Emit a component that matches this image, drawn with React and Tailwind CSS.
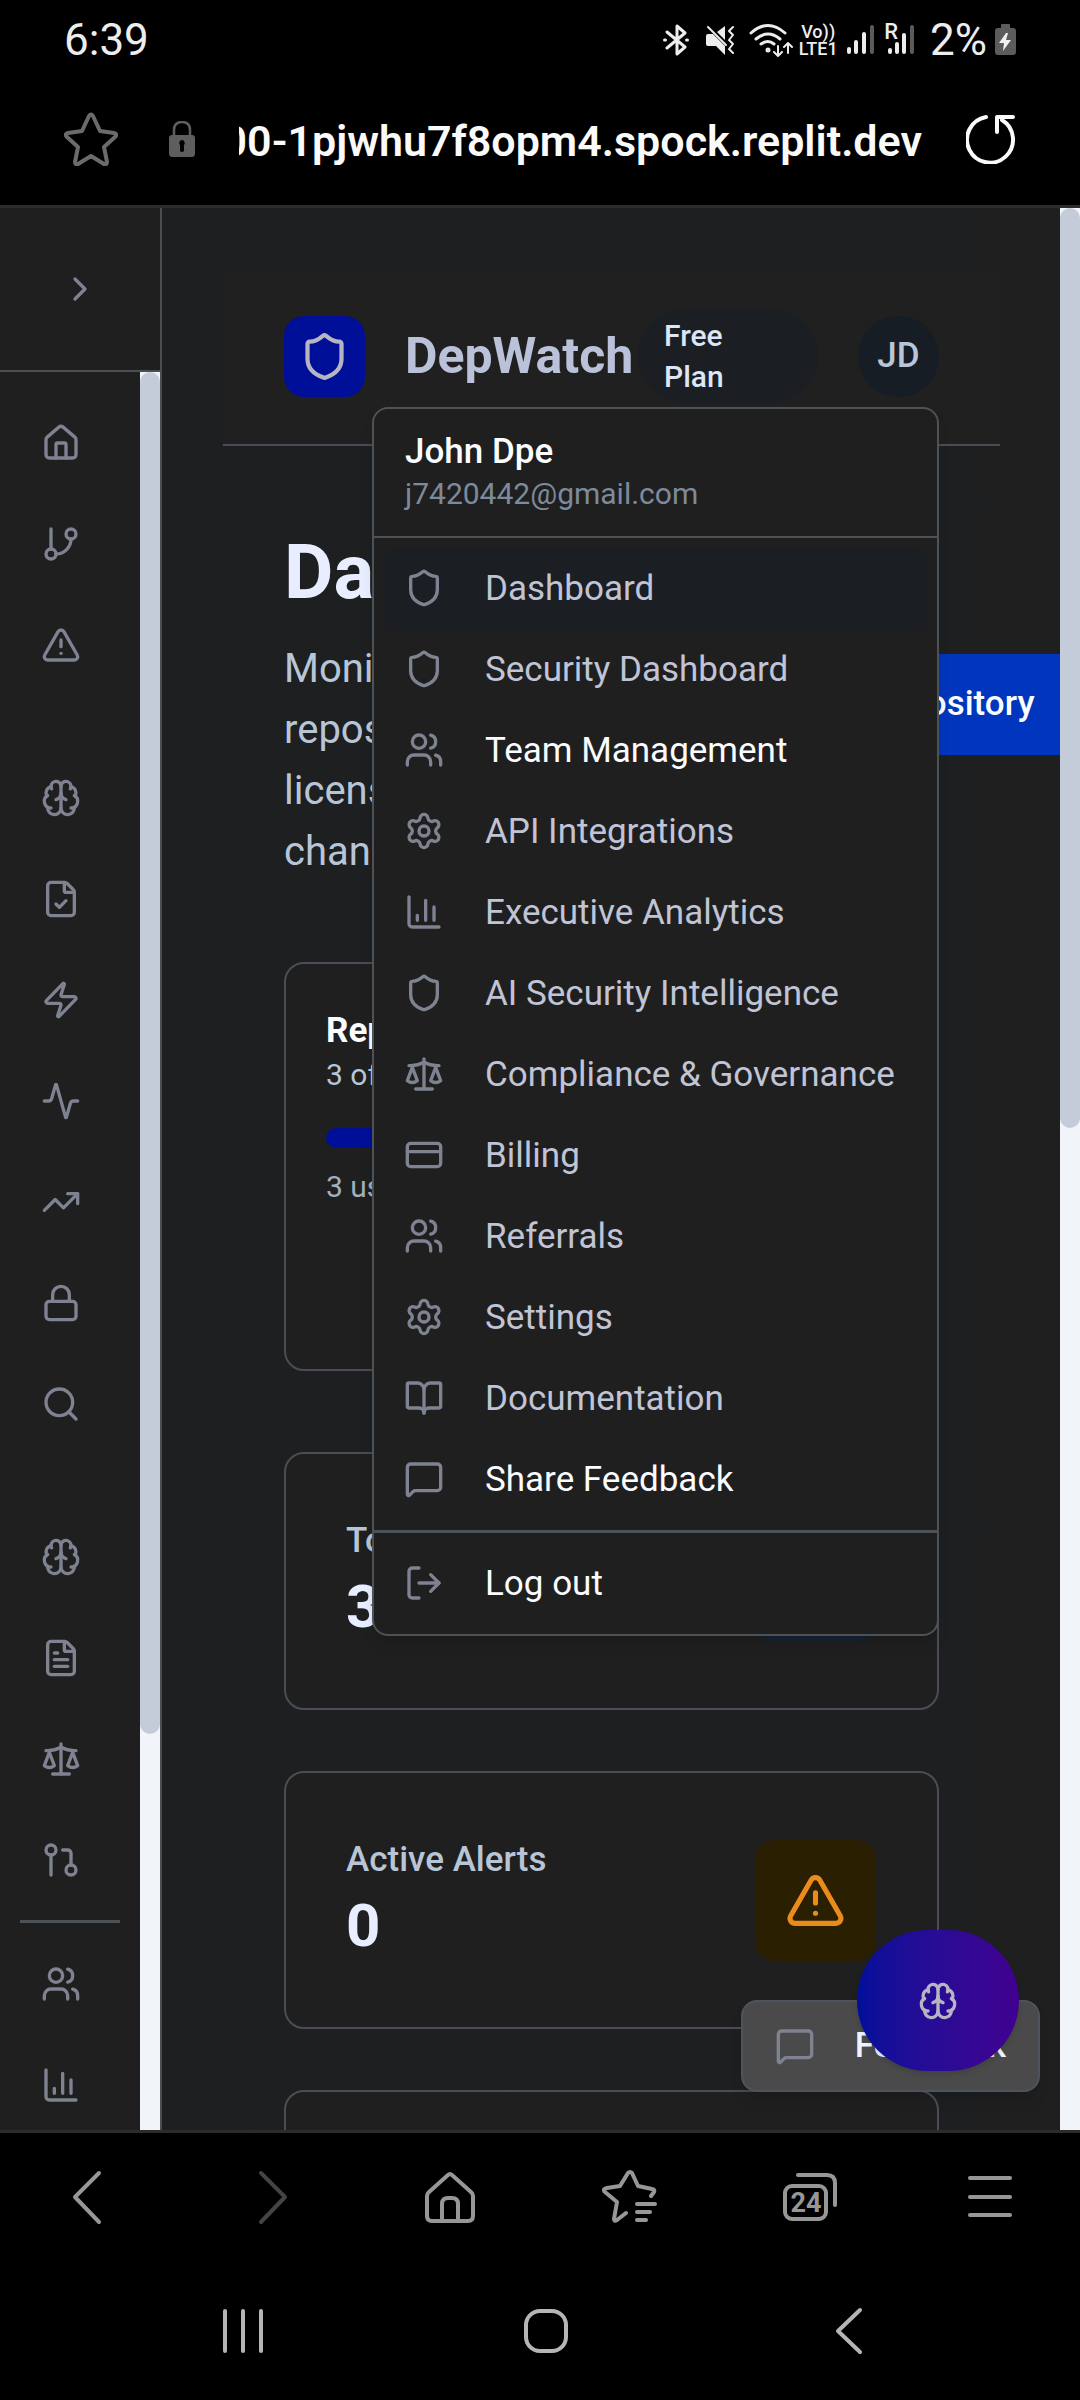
import React from "react";
import {
  Activity, BookOpen, Brain, ChevronRight, CreditCard, FileCheck, FileText, GitBranch,
  GitPullRequest, House, Lock, LogOut, MessageSquare, Plus, Scale, Search, Settings,
  Shield, TrendingUp, TriangleAlert, Users, Zap,
} from "lucide-react";

const navGroups = [
  [["Home", House], ["Repositories", GitBranch], ["Alerts", TriangleAlert]],
  [
    ["AI Insights", Brain], ["Policies", FileCheck], ["Automation", Zap], ["Activity", Activity],
    ["Trends", TrendingUp], ["Security", Lock], ["Search", Search],
  ],
  [["AI Analysis", Brain], ["Reports", FileText], ["Compliance", Scale], ["Pull Requests", GitPullRequest]],
];

const navFooter = [["Team", Users], ["Analytics", BarIcon]];

const menuItems = [
  ["Dashboard", Shield, "active"],
  ["Security Dashboard", Shield],
  ["Team Management", Users, "bright"],
  ["API Integrations", Settings],
  ["Executive Analytics", BarIcon],
  ["AI Security Intelligence", Shield],
  ["Compliance & Governance", Scale],
  ["Billing", CreditCard],
  ["Referrals", Users],
  ["Settings", Settings],
  ["Documentation", BookOpen],
  ["Share Feedback", MessageSquare, "bright"],
];

function BarIcon({ className }) {
  return (
    <svg viewBox="0 0 24 24" className={className} fill="none" stroke="currentColor" strokeWidth="2" strokeLinecap="round" strokeLinejoin="round">
      <path d="M3 3v16a2 2 0 0 0 2 2h16" />
      <path d="M8 17v-3M13 17V5M18 17V9" />
    </svg>
  );
}

function StatusBar() {
  return (
    <div className="flex h-20 items-center pl-16 pr-16 text-[#ededed]">
      <span className="text-[44px] leading-[48px]">6:39</span>
      <div className="ml-auto flex items-center">
        <svg viewBox="0 0 26 32" className="h-8 w-[26px]" fill="none" stroke="currentColor" strokeWidth="3" strokeLinecap="round" strokeLinejoin="round">
          <path d="M4 8l18 15-8 7V2l8 7L4 24" />
          <path d="M1.500 16h1M23.500 16h1" />
        </svg>
        <svg viewBox="0 0 30 32" className="ml-4 h-8 w-[30px]">
          <path d="M1 12q0-2 2-2h5L20 22v9l-9-9H3q-2 0-2-2zM12 8l8-6v14z" fill="currentColor" />
          <path d="M3 3l18 18" stroke="currentColor" strokeWidth="2" strokeLinecap="round" />
          <path d="M28 3l-4 4 4 4-4 5 4 4-4 5 4 4" fill="none" stroke="currentColor" strokeWidth="2" strokeLinecap="round" strokeLinejoin="round" />
        </svg>
        <svg viewBox="0 0 45 34" className="ml-3.5 h-[34px] w-[45px]" fill="none" stroke="currentColor" strokeWidth="3" strokeLinecap="round" strokeLinejoin="round">
          <path d="M2 10q17-15 34 0M7 16q12-10 24 0M12 21q7-5 13 0" />
          <circle cx="19" cy="27" r="1" fill="currentColor" />
          <path d="M29 23v10l-4-4m4 4l4-4M39 30V20l-4 4m4-4l4 4" strokeWidth="2" />
        </svg>
        <span className="ml-1 flex w-10 flex-col items-center text-[18px] font-medium leading-[17px]">
          <span>Vo))</span>
          <span>LTE1</span>
        </span>
        <svg viewBox="0 0 28 32" className="ml-2 h-8 w-7" stroke="currentColor" strokeWidth="4" strokeLinecap="round">
          <path d="M3 25v3M10 18v10M18 10v18" />
          <path d="M26 3v25" stroke="#5a5a5a" />
        </svg>
        <span className="ml-2.5 flex items-start">
          <span className="text-[22px] font-medium leading-4">R</span>
          <svg viewBox="0 0 28 32" className="-ml-3 h-8 w-7" stroke="currentColor" strokeWidth="4" strokeLinecap="round">
            <path d="M4 26v2M11 20v8M18 11v17" />
            <path d="M26 3v25" stroke="#5a5a5a" />
          </svg>
        </span>
        <span className="ml-4 text-[44px] leading-[48px]">2%</span>
        <svg viewBox="0 0 21 32" className="ml-2 h-8 w-[21px]">
          <path d="M6 4V1q0-1 1-1h7q1 0 1 1v3h3q3 0 3 3v21q0 3-3 3H3q-3 0-3-3V7q0-3 3-3z" fill="#5c5c5c" />
          <path d="M11 9L4 19h5l-1 8 8-11h-5l2-7z" fill="#f0f0f0" />
        </svg>
      </div>
    </div>
  );
}

function AddressBar() {
  return (
    <div className="flex h-[125px] items-center pb-2 pl-16 pr-16">
      <button aria-label="Bookmark" className="shrink-0 text-[#6b6b6b]">
        <svg viewBox="0 0 54 54" className="size-[54px]" fill="none" stroke="currentColor" strokeWidth="4" strokeLinejoin="round">
          <path d="M25 4q2-3 4 0l7 15 14 2q4 1 1 4L40 35l3 15q0 3-3 2L27 44l-13 8q-3 1-3-2l3-15L3 25q-3-3 1-4l14-2z" />
        </svg>
      </button>
      <svg viewBox="0 0 26 36" className="ml-[51px] h-9 w-[26px] shrink-0">
        <path d="M5 16V9q0-8 8-8t8 8v7" fill="none" stroke="#5e5e5e" strokeWidth="2.500" />
        <path d="M3 14h20q3 0 3 3v15q0 4-3 4H3q-3 0-3-4V17q0-3 3-3z" fill="#5e5e5e" />
        <path d="M13 19a3 3 0 0 1 2 5v6q-2 2-4 0v-6a3 3 0 0 1 2-5z" fill="#000" />
      </svg>
      <div className="ml-11 flex min-w-0 flex-1 justify-end overflow-hidden whitespace-nowrap pt-1 text-[43px] font-semibold leading-[56px] text-[#fafafa]">
        <span>00-1pjwhu7f8opm4.spock.replit.dev</span>
      </div>
      <button aria-label="Reload" className="ml-11 shrink-0 text-[#fafafa]">
        <svg viewBox="0 0 50 50" className="size-[50px]" fill="none" stroke="currentColor" strokeWidth="4" strokeLinecap="round" strokeLinejoin="round">
          <path d="M20 3A23 23 0 1 0 36 6" />
          <path d="M31 18V3h16" />
        </svg>
      </button>
    </div>
  );
}

function NavButton({ label, Icon }) {
  return (
    <button aria-label={label} className="flex h-[101px] w-full shrink-0 items-center justify-center">
      <Icon className="size-10" />
    </button>
  );
}

function Sidebar() {
  return (
    <aside className="flex w-[162px] shrink-0 flex-col border-r-2 border-[#4a4e54] bg-[#1f1f1f] text-[#7e8291]">
      <div className="flex h-[164px] shrink-0 items-center justify-center border-b-2 border-[#4a4f55]">
        <button aria-label="Expand sidebar"><ChevronRight className="size-10" /></button>
      </div>
      <div className="flex min-h-0 flex-1">
        <nav className="flex min-w-0 flex-1 flex-col overflow-hidden px-5 pt-5">
          <div className="flex w-[81px] flex-col gap-[52px]">
            {navGroups.map((group, i) => (
              <div key={i}>{group.map(([label, Icon]) => <NavButton key={label} label={label} Icon={Icon} />)}</div>
            ))}
          </div>
          <hr className="my-2.5 border-t-[3px] border-[#4d5257]" />
          <div className="w-[81px]">
            {navFooter.map(([label, Icon]) => <NavButton key={label} label={label} Icon={Icon} />)}
          </div>
        </nav>
        <div className="w-5 shrink-0 bg-[#f1f5f9]"><div className="h-[1362px] rounded-full bg-[#c3ccd8]" /></div>
      </div>
    </aside>
  );
}

function MenuItem({ label, Icon, state }) {
  return (
    <button
      role="menuitem"
      className={
        "flex h-[81px] w-full items-center gap-[41px] rounded-[10px] px-5 text-left text-[35px] leading-[51px] " +
        (state === "active" ? "bg-[#1b1e22] text-[#c0c4d6]" : state === "bright" ? "text-[#fafcff]" : "text-[#c0c4d6]")
      }
    >
      <Icon className="size-10 shrink-0 text-[#7e8291]" />
      <span className="whitespace-nowrap">{label}</span>
    </button>
  );
}

function UserMenu() {
  return (
    <div role="menu" className="absolute right-0 top-full z-20 mt-2.5 w-[567px] rounded-2xl border-2 border-[#4d5257] bg-[#1f1f1f] shadow-lg">
      <div className="h-[129px] border-b-2 border-[#4d5257] px-[31px] pt-[17px]">
        <p className="text-[35px] font-medium leading-[51px] text-[#fafcff]">John Dpe</p>
        <p className="text-[30px] leading-[34px] text-[#7d8a9c]">j7420442@gmail.com</p>
      </div>
      <div className="p-2.5">
        {menuItems.map(([label, Icon, state]) => <MenuItem key={label} label={label} Icon={Icon} state={state} />)}
      </div>
      <div className="border-t-[3px] border-[#4d5257] p-2.5">
        <MenuItem label="Log out" Icon={LogOut} state="bright" />
      </div>
    </div>
  );
}

function AppHeader() {
  return (
    <header className="ml-[61px] mr-15 mt-[61px] flex items-center justify-between border-b-2 border-[#4a4e54] bg-[#202020] px-[61px] pb-[41px] pt-10">
      <div className="flex items-center gap-10">
        <div className="flex size-[81px] items-center justify-center rounded-[20px] bg-[#000f97] text-[#b7b5c2]">
          <Shield className="size-[51px]" />
        </div>
        <span className="text-[50px] font-bold leading-[71px] text-[#b9c2d8]">DepWatch</span>
      </div>
      <div className="flex items-center gap-10">
        <div className="w-[180px] rounded-full bg-[#1b1e22] px-[26px] py-1.5 text-[30px] font-medium leading-[41px] text-[#dce6f7]">
          Free<br />Plan
        </div>
        <div className="relative">
          <button className="flex size-[81px] items-center justify-center rounded-full bg-[#161d25] text-[35px] font-medium text-[#b9c6d8]">JD</button>
          <UserMenu />
        </div>
      </div>
    </header>
  );
}

const card = "rounded-[20px] border-2 border-[#4a4e54] bg-[#1f1f1f]";

function StatCard({ label, value, Icon, tone }) {
  return (
    <section className={card + " flex shrink-0 items-center justify-between py-[61px] pl-[60px] pr-[61px]"}>
      <div>
        <p className="text-[35px] font-medium leading-[51px] text-[#b8c5d7]">{label}</p>
        <p className="text-[60px] font-bold leading-[81px] text-[#e8edff]">{value}</p>
      </div>
      <div className={"flex size-[121px] items-center justify-center rounded-[20px] " + tone}>
        <Icon className="size-[61px]" />
      </div>
    </section>
  );
}

function Main() {
  return (
    <main className="min-w-0 flex-1 overflow-hidden bg-gradient-to-r from-[#1d1f21] to-[#1f1f20]">
      <AppHeader />
      <div className="mt-[81px] flex flex-col pl-[122px] pr-[121px]">
        <div className="flex items-center gap-10">
          <div className="w-[371px] shrink-0">
            <h1 className="text-[76px] font-bold leading-[91px] text-[#e8edff]">Dashboard</h1>
            <p className="mt-5 text-[40px] leading-[61px] text-[#b8c5d7]">
              Monitor your<br />repositories for<br />license<br />changes
            </p>
          </div>
          <button className="flex h-[101px] shrink-0 items-center gap-5 whitespace-nowrap bg-[#0036bd] px-10 text-[35px] font-medium text-[#fafcff]">
            <Plus className="size-10" />
            Add Repository
          </button>
        </div>
        <section className={card + " mt-20 min-h-[409px] shrink-0 px-10 pt-[41px]"}>
          <h2 className="text-[35px] font-bold leading-[51px] text-[#fafcff]">Repository Usage</h2>
          <p className="text-[30px] leading-[38px] text-[#b8c5d7]">3 of 3 repositories</p>
          <div className="mt-[34px] h-5 rounded-full bg-[#000f97]" />
          <p className="mt-[18px] text-[30px] leading-[41px] text-[#a3afbf]">3 used</p>
        </section>
        <div className="mt-[81px] flex flex-col gap-[61px]">
          <StatCard label="Total Repositories" value="3" Icon={GitBranch} tone="bg-[#162333] text-[#3b82f6]" />
          <StatCard label="Active Alerts" value="0" Icon={TriangleAlert} tone="bg-[#2b1f02] text-[#ea8c1c]" />
          <StatCard label="Compliance" value="100%" Icon={Shield} tone="bg-[#0d2a1a] text-[#22c55e]" />
        </div>
      </div>
    </main>
  );
}

function BrowserToolbar() {
  return (
    <nav className="grid h-[131px] grid-cols-6 place-items-center pb-1 text-[#979797]" aria-label="Browser">
      <button aria-label="Back">
        <svg viewBox="0 0 56 56" className="size-14" fill="none" stroke="currentColor" strokeWidth="4" strokeLinecap="round" strokeLinejoin="round"><path d="M37 4L13 28l24 25" /></svg>
      </button>
      <button aria-label="Forward" className="text-[#444]">
        <svg viewBox="0 0 56 56" className="size-14" fill="none" stroke="currentColor" strokeWidth="4" strokeLinecap="round" strokeLinejoin="round"><path d="M19 4l24 24-24 25" /></svg>
      </button>
      <button aria-label="Home page">
        <svg viewBox="0 0 56 56" className="size-14" fill="none" stroke="currentColor" strokeWidth="4" strokeLinejoin="round">
          <path d="M26 6q2-2 4 0l19 17q2 2 2 4v20q0 5-5 5H10q-5 0-5-5V27q0-2 2-4z" />
          <path d="M20 52V35q0-6 6-6h4q6 0 6 6v17" />
        </svg>
      </button>
      <button aria-label="Bookmarks">
        <svg viewBox="0 0 56 56" className="size-14" fill="none" stroke="currentColor" strokeWidth="4" strokeLinecap="round" strokeLinejoin="round">
          <path d="M24 44l-9 7q-3 2-3-1l3-17L3 23q-3-3 2-4l13-2 8-13q2-2 4 0l6 13 14 3q3 0 2 3l-3 4" />
          <path d="M35 35h18M35 43h13M35 51h9" />
        </svg>
      </button>
      <button aria-label="Tabs" className="relative">
        <svg viewBox="0 0 56 56" className="size-14" fill="none" stroke="currentColor" strokeWidth="4" strokeLinecap="round">
          <rect x="3" y="17" width="41" height="33" rx="7" />
          <path d="M16 6h29q8 0 8 8v22" />
        </svg>
        <span className="absolute left-0 top-[18px] w-12 text-center text-[27px] font-bold leading-8">24</span>
      </button>
      <button aria-label="Menu">
        <svg viewBox="0 0 56 56" className="size-14" fill="none" stroke="currentColor" strokeWidth="4" strokeLinecap="round"><path d="M8 9h40M8 28h40M8 46h40" /></svg>
      </button>
    </nav>
  );
}

function SystemNav() {
  return (
    <nav className="grid h-[136px] grid-cols-3 place-items-center pb-0.5 pl-[91px] pr-20 text-[#b5b5b5]" aria-label="System">
      <button aria-label="Recents">
        <svg viewBox="0 0 48 48" className="size-12" fill="none" stroke="currentColor" strokeWidth="4" strokeLinecap="round"><path d="M6 4v40M24 4v40M42 4v40" /></svg>
      </button>
      <button aria-label="Home screen">
        <svg viewBox="0 0 48 48" className="size-12" fill="none" stroke="currentColor" strokeWidth="4"><rect x="4" y="4" width="40" height="40" rx="14" /></svg>
      </button>
      <button aria-label="Go back">
        <svg viewBox="0 0 48 48" className="size-12" fill="none" stroke="currentColor" strokeWidth="4" strokeLinecap="round" strokeLinejoin="round"><path d="M35 3L13 24l22 21" /></svg>
      </button>
    </nav>
  );
}

export default function App() {
  return (
    <div className="flex h-screen flex-col bg-black font-['Roboto',sans-serif]">
      <StatusBar />
      <AddressBar />
      <div className="relative flex min-h-0 flex-1 overflow-hidden border-y-[3px] border-[#2c2c2c]">
        <Sidebar />
        <Main />
        <div className="w-5 shrink-0 bg-[#f1f5f9]"><div className="h-[920px] rounded-full bg-[#c3ccd8]" /></div>
        <button className="absolute bottom-[38px] right-10 z-30 flex h-[92px] items-center gap-10 rounded-2xl border-2 border-[#4d545c] bg-[#4a4a4a] px-8 text-[35px] font-medium text-[#eef4ff] shadow-lg">
          <MessageSquare className="size-10 text-[#7e8291]" />
          Feedback
        </button>
        <button aria-label="AI assistant" className="absolute bottom-[59px] right-[61px] z-30 flex h-[141px] w-[162px] items-center justify-center rounded-full bg-gradient-to-r from-[#000f9a] to-[#400090] text-[#b7b5c2] shadow-md">
          <Brain className="size-10" />
        </button>
      </div>
      <BrowserToolbar />
      <SystemNav />
    </div>
  );
}
